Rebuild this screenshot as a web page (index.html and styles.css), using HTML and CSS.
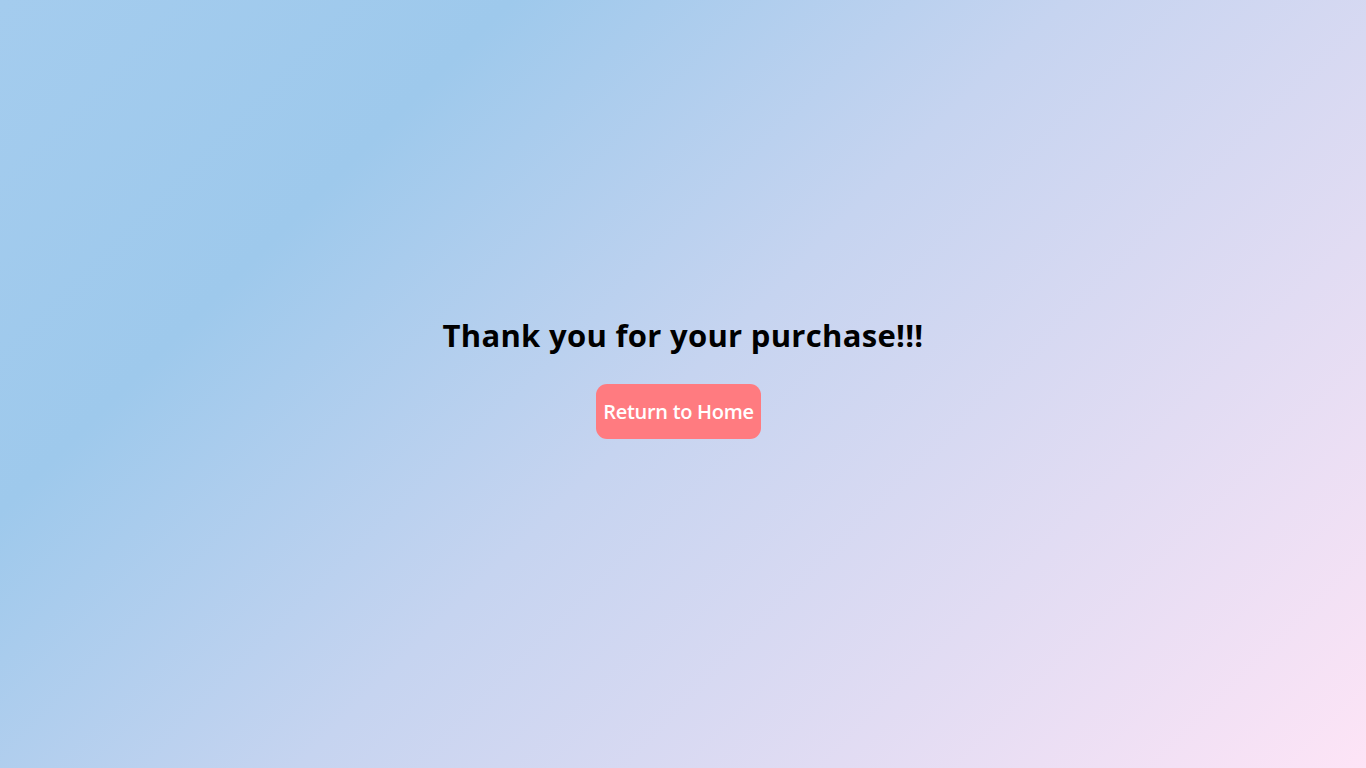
FILE: index.html
```html
<!DOCTYPE html>
<html lang="en">
<head>
<meta charset="utf-8">
<title>Thank you</title>
<link rel="stylesheet" href="styles.css">
</head>
<body>
<main class="page">
  <h1 class="title">Thank you for your purchase!!!</h1>
  <a class="home-btn" href="#">Return to Home</a>
</main>
</body>
</html>
```
FILE: styles.css
```css
html, body {
  margin: 0;
  height: 100%;
}
body {
  font-family: "Open Sans", "Noto Sans", sans-serif;
  background: linear-gradient(135deg, #a4ccee 0%, #9ec9ec 24%, #c6d4f0 50%, #fde4f6 100%);
}
.page {
  box-sizing: border-box;
  height: 100%;
  padding-bottom: 10px;
  display: flex;
  flex-direction: column;
  align-items: center;
  justify-content: center;
  gap: 33px;
}
.title {
  margin: 0;
  font-size: 31px;
  line-height: 32px;
  font-weight: 700;
  color: #000;
  letter-spacing: 0.3px;
}
.home-btn {
  display: flex;
  align-items: center;
  justify-content: center;
  width: 165px;
  height: 55px;
  margin-right: 9px;
  border-radius: 11px;
  background: #ff7b80;
  color: #fff;
  font-size: 20px;
  font-weight: 600;
  letter-spacing: -0.3px;
  text-decoration: none;
}
```
